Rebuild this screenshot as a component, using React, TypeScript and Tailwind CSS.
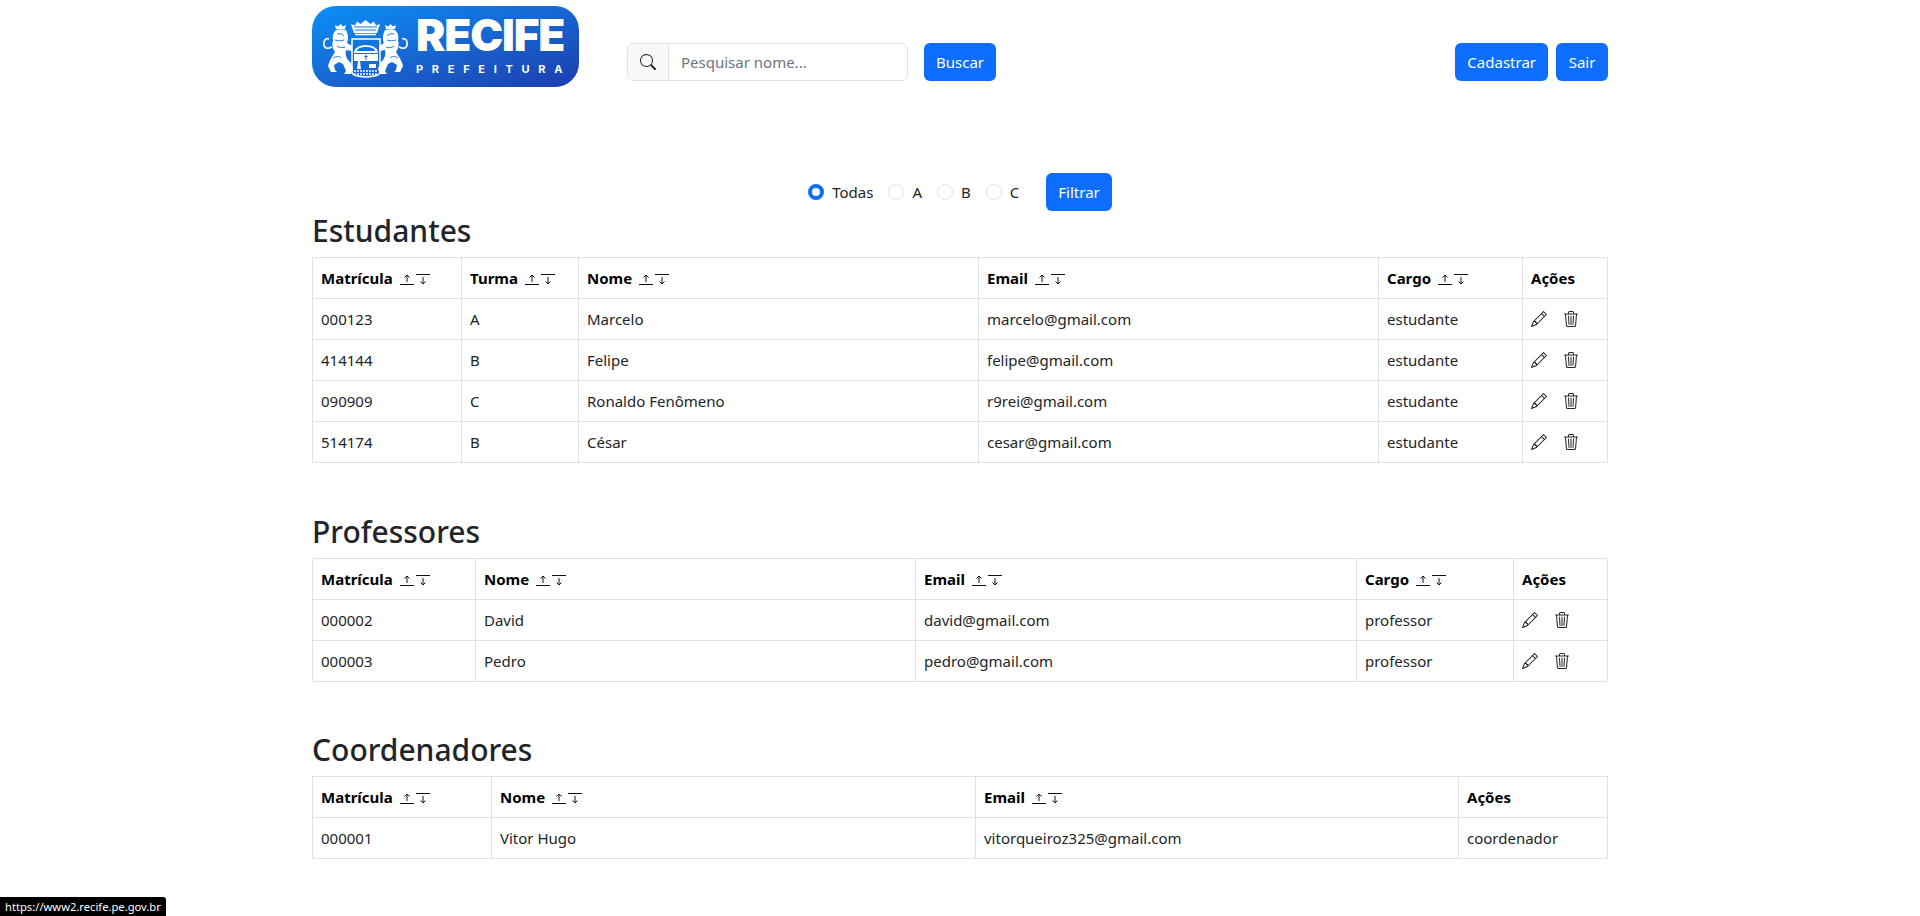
const font = { fontFamily: '"Noto Sans", "Liberation Sans", sans-serif' }

function SearchIcon() {
  return (
    <svg width="16" height="16" viewBox="0 0 16 16" fill="#212529">
      <path d="M11.742 10.344a6.5 6.5 0 1 0-1.397 1.398h-.001c.03.04.062.078.098.115l3.85 3.85a1 1 0 0 0 1.415-1.414l-3.85-3.85a1.007 1.007 0 0 0-.115-.1zM12 6.5a5.5 5.5 0 1 1-11 0 5.5 5.5 0 0 1 11 0z" />
    </svg>
  )
}

function PencilIcon() {
  return (
    <svg width="16" height="16" viewBox="0 0 16 16" fill="#212529">
      <path d="M12.146.146a.5.5 0 0 1 .708 0l3 3a.5.5 0 0 1 0 .708l-10 10a.5.5 0 0 1-.168.11l-5 2a.5.5 0 0 1-.65-.65l2-5a.5.5 0 0 1 .11-.168l10-10zM11.207 2.5 13.5 4.793 14.793 3.5 12.5 1.207 11.207 2.5zm1.586 3L10.5 3.207 4 9.707V10h.5a.5.5 0 0 1 .5.5v.5h.5a.5.5 0 0 1 .5.5v.5h.293l6.5-6.5zm-9.761 5.175-.106.106-1.528 3.821 3.821-1.528.106-.106A.5.5 0 0 1 5 12.5V12h-.5a.5.5 0 0 1-.5-.5V11h-.5a.5.5 0 0 1-.468-.325z" />
    </svg>
  )
}

function TrashIcon() {
  return (
    <svg width="16" height="16" viewBox="0 0 16 16" fill="#212529">
      <path d="M6.5 1h3a.5.5 0 0 1 .5.5v1H6v-1a.5.5 0 0 1 .5-.5ZM11 2.5v-1A1.5 1.5 0 0 0 9.5 0h-3A1.5 1.5 0 0 0 5 1.5v1H2.506a.58.58 0 0 0-.01 0H1.5a.5.5 0 0 0 0 1h.538l.853 10.66A2 2 0 0 0 4.885 16h6.23a2 2 0 0 0 1.994-1.84l.853-10.66h.538a.5.5 0 0 0 0-1h-.997a.58.58 0 0 0-.01 0H11Zm1.958 1-.846 10.58a1 1 0 0 1-.997.92h-6.23a1 1 0 0 1-.997-.92L3.042 3.5h9.916Zm-7.487 1a.5.5 0 0 1 .528.47l.5 8.5a.5.5 0 0 1-.998.06L5 5.03a.5.5 0 0 1 .47-.53Zm5.058 0a.5.5 0 0 1 .47.53l-.5 8.5a.5.5 0 1 1-.998-.06l.5-8.5a.5.5 0 0 1 .528-.47ZM8 4.5a.5.5 0 0 1 .5.5v8.5a.5.5 0 0 1-1 0V5a.5.5 0 0 1 .5-.5Z" />
    </svg>
  )
}

// the two little sort arrows beside each header label
function SortIcons() {
  return (
    <span className="ml-[7px] inline-flex items-center gap-[2px] align-[-2px]">
      <svg width="14" height="13" viewBox="0 0 14 13" fill="none" stroke="#111" strokeWidth="1">
        <path d="M0 11.5h14M7 9V2M4.5 4.5 7 2l2.5 2.5" />
      </svg>
      <svg width="14" height="13" viewBox="0 0 14 13" fill="none" stroke="#111" strokeWidth="1">
        <path d="M0 1.5h14M7 4v7M4.5 8.5 7 11l2.5-2.5" />
      </svg>
    </span>
  )
}

function Lion() {
  return (
    <g>
      {/* tail */}
      <path d="M14 33C8 36 5 33 6 28c.5-3 3-4 5-3" stroke="#fff" strokeWidth="1.6" fill="none" />
      {/* little crown */}
      <path d="M18 15l-1-4 3 1.5L22.500 10l2.500 2.500 3-1.500-1 4Z" fill="#fff" />
      {/* body */}
      <path
        d="M18 16c3-1 7-1 10 0 2 4 3 9 1 13l5 3v5l-6-1c-1 4 0 7 2 10l3 3 2 6-2 5h-7l2-3-3-7-4-2-5 3 1 5 2 2H13l-3-6c1-5 4-9 7-14-3-4-3-8-2-12-1-4 0-7 3-10Z"
        fill="#fff"
      />
      <path
        d="M19 20c3-1 5 0 7 2M17 26c3 1 6 1 9 0M19 32c2 2 5 2 8 1M15 44c3-2 6-2 8 0"
        stroke="#1a78e6"
        strokeWidth="1"
        fill="none"
      />
    </g>
  )
}

function Crest() {
  return (
    <svg width="96" height="66" viewBox="0 0 96 66" className="shrink-0">
      <Lion />
      <g transform="translate(95 0) scale(-1 1)">
        <Lion />
      </g>
      {/* crown */}
      <path d="M33 10l4 1.500 2-4 3.500 2.500 5-4 5 4 3.500-2.500 2 4 4-1.500-3 9H36Z" fill="#fff" />
      <path d="M36 13h23M37 16h21" stroke="#1a78e6" strokeWidth="1" />
      <path d="M37 20.500h21" stroke="#fff" strokeWidth="1.600" />
      {/* shield */}
      <path d="M34 25h28v33c0 3-3 4-14 5-11-1-14-2-14-5Z" fill="none" stroke="#fff" strokeWidth="1.500" />
      <path d="M37 38c2-8 20-8 22 0Z" fill="none" stroke="#fff" strokeWidth="2" />
      <path d="M36 40h24v7H36Z" fill="#fff" />
      <path d="M48 41v5M46.500 42.500h3" stroke="#1a5fd0" strokeWidth="1" />
      <path d="M39 55l1-8h2l1 8ZM51 50h7v4h-7Z" fill="#fff" />
      <path d="M36 57h24M36 60h24" stroke="#fff" strokeWidth="1.500" strokeDasharray="2 1" />
    </svg>
  )
}

function Logo() {
  return (
    <div className="flex h-[81px] w-[267px] items-center rounded-[24px] bg-gradient-to-br from-[#0790f7] to-[#1c3cae] pl-[6px]">
      <Crest />
      <div className="ml-[2px] flex w-[150px] flex-col text-white" style={{ fontFamily: 'Inter, sans-serif' }}>
        <span className="h-[32px] text-[44px] leading-[32px] font-black tracking-[-1.1px] whitespace-nowrap">RECIFE</span>
        <span className="mt-[14px] h-[9px] text-[11px] leading-[9px] font-bold tracking-[8.7px] whitespace-nowrap">PREFEITURA</span>
      </div>
    </div>
  )
}

type Col = { label: string; width: string; sort: boolean }

const th = 'border border-[#dee2e6] p-2 text-left text-[15px] leading-6 font-bold text-black'
const td = 'border border-[#dee2e6] p-2 text-[15px] leading-6 text-[#212529]'

function DataTable({ cols, rows, actions }: { cols: Col[]; rows: string[][]; actions: boolean }) {
  return (
    <table className="w-[1295px] table-fixed border-collapse">
      <colgroup>
        {cols.map((c) => (
          <col key={c.label} className={c.width} />
        ))}
      </colgroup>
      <thead>
        <tr>
          {cols.map((c) => (
            <th key={c.label} className={th}>
              {c.label}
              {c.sort && <SortIcons />}
            </th>
          ))}
        </tr>
      </thead>
      <tbody>
        {rows.map((r) => (
          <tr key={r[0]}>
            {r.map((v, i) => (
              <td key={i} className={td}>
                {v}
              </td>
            ))}
            {actions && (
              <td className={td}>
                <div className="flex items-center gap-4">
                  <PencilIcon />
                  <TrashIcon />
                </div>
              </td>
            )}
          </tr>
        ))}
      </tbody>
    </table>
  )
}

const studentCols: Col[] = [
  { label: 'Matrícula', width: 'w-[149px]', sort: true },
  { label: 'Turma', width: 'w-[117px]', sort: true },
  { label: 'Nome', width: 'w-[400px]', sort: true },
  { label: 'Email', width: 'w-[400px]', sort: true },
  { label: 'Cargo', width: 'w-[144px]', sort: true },
  { label: 'Ações', width: 'w-[85px]', sort: false },
]

const teacherCols: Col[] = [
  { label: 'Matrícula', width: 'w-[163px]', sort: true },
  { label: 'Nome', width: 'w-[440px]', sort: true },
  { label: 'Email', width: 'w-[441px]', sort: true },
  { label: 'Cargo', width: 'w-[157px]', sort: true },
  { label: 'Ações', width: 'w-[94px]', sort: false },
]

const coordCols: Col[] = [
  { label: 'Matrícula', width: 'w-[179px]', sort: true },
  { label: 'Nome', width: 'w-[484px]', sort: true },
  { label: 'Email', width: 'w-[483px]', sort: true },
  { label: 'Ações', width: 'w-[149px]', sort: false },
]

function Btn({ children, wide }: { children: string; wide?: boolean }) {
  return (
    <button className={wide ? 'h-[38px] w-[52px] rounded-md bg-[#0d6efd] text-[15px] text-white' : 'h-[38px] rounded-md bg-[#0d6efd] px-3 text-[15px] text-white'}>
      {children}
    </button>
  )
}

function Radio({ label, checked }: { label: string; checked?: boolean }) {
  return (
    <label className="flex items-center gap-2 text-[15px] text-[#212529]">
      <span
        className={
          checked
            ? 'h-4 w-4 rounded-full border-[4px] border-[#0d6efd] bg-white'
            : 'h-4 w-4 rounded-full border border-[#dee2e6] bg-white'
        }
      />
      {label}
    </label>
  )
}

const heading = 'mb-[6px] text-[30px] leading-[40px] font-medium text-[#212529]'

export default function App() {
  return (
    <div className="relative min-h-[916px] bg-white" style={font}>
      <div className="mx-auto w-[1296px]">
        <header className="flex items-start pt-[6px]">
          <Logo />
          <div className="ml-[48px] mt-[37px] flex items-center">
            <div className="flex h-[38px] w-[281px] overflow-hidden rounded-md border border-[#dee2e6]">
              <span className="flex w-[41px] items-center justify-center border-r border-[#dee2e6] bg-[#f8f9fa]">
                <SearchIcon />
              </span>
              <span className="flex items-center pl-3 text-[15px] text-[#6c757d]">Pesquisar nome...</span>
            </div>
            <div className="ml-4">
              <Btn>Buscar</Btn>
            </div>
          </div>
          <div className="ml-auto mt-[37px] flex gap-[8px]">
            <Btn>Cadastrar</Btn>
            <Btn wide>Sair</Btn>
          </div>
        </header>

        <div className="mt-[86px] flex h-[38px] items-center justify-center gap-[15px]">
          <Radio label="Todas" checked />
          <Radio label="A" />
          <Radio label="B" />
          <Radio label="C" />
          <div className="ml-[12px]">
            <Btn>Filtrar</Btn>
          </div>
        </div>

        <section>
          <h2 className={heading}>Estudantes</h2>
          <DataTable
            cols={studentCols}
            actions
            rows={[
              ['000123', 'A', 'Marcelo', 'marcelo@gmail.com', 'estudante'],
              ['414144', 'B', 'Felipe', 'felipe@gmail.com', 'estudante'],
              ['090909', 'C', 'Ronaldo Fenômeno', 'r9rei@gmail.com', 'estudante'],
              ['514174', 'B', 'César', 'cesar@gmail.com', 'estudante'],
            ]}
          />
        </section>

        <section className="mt-[49px]">
          <h2 className={heading}>Professores</h2>
          <DataTable
            cols={teacherCols}
            actions
            rows={[
              ['000002', 'David', 'david@gmail.com', 'professor'],
              ['000003', 'Pedro', 'pedro@gmail.com', 'professor'],
            ]}
          />
        </section>

        <section className="mt-[48px]">
          <h2 className={heading}>Coordenadores</h2>
          <DataTable
            cols={coordCols}
            actions={false}
            rows={[['000001', 'Vitor Hugo', 'vitorqueiroz325@gmail.com', 'coordenador']]}
          />
        </section>
      </div>

      <div className="absolute bottom-0 left-0 rounded-tr-[3px] bg-black px-[5px] text-[11.2px] leading-[19px] text-white">
        https://www2.recife.pe.gov.br
      </div>
    </div>
  )
}
